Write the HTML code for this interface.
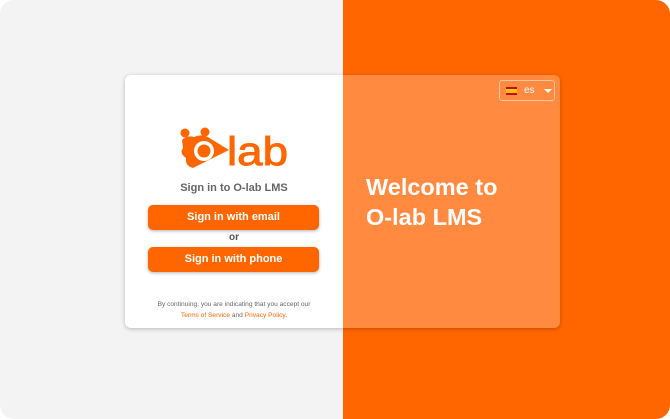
<!DOCTYPE html>
<html><head><meta charset="utf-8"><style>
*{margin:0;padding:0;box-sizing:border-box}
html,body{width:670px;height:419px;overflow:hidden;background:#fff}
body{font-family:"Liberation Sans",sans-serif}
.bg{position:absolute;left:0;top:0;width:670px;height:419px;border-radius:14px;overflow:hidden;background:#f3f3f3}
.right{position:absolute;left:343px;top:0;width:327px;height:419px;background:#ff6600}
.card{position:absolute;left:125px;top:75px;width:435px;height:253px;border-radius:6px;overflow:hidden;box-shadow:0 1px 4px rgba(0,0,0,.25)}
.cl{position:absolute;left:0;top:0;width:218px;height:253px;background:#fff}
.cr{position:absolute;left:218px;top:0;width:217px;height:253px;background:#ff8a40}
.title{position:absolute;left:0;width:218px;top:107px;text-align:center;font-size:11px;font-weight:bold;color:#666}
.btn{position:absolute;left:23px;width:171px;height:25px;border-radius:5px;background:#ff6600;color:#fff;font-weight:bold;font-size:11px;text-align:center;line-height:25px;box-shadow:0 1px 3px rgba(0,0,0,.3)}
.or{position:absolute;left:0;width:218px;top:157px;text-align:center;font-size:10px;font-weight:bold;color:#555}
.small{position:absolute;left:0;width:218px;top:224px;text-align:center;font-size:6.6px;color:#666;line-height:11px}
.small b{color:#ff6600;font-weight:normal}
.welcome{position:absolute;left:241px;top:97px;color:#fff;font-weight:bold;font-size:23.5px;line-height:30px}
.lang{position:absolute;left:374px;top:5px;width:56px;height:21px;border:1px solid #ffc7a0;border-radius:3px;color:#fff;font-size:10px}
</style></head><body>
<div class="bg"><div class="right"></div></div>
<div class="card">
 <div class="cl"></div>
 <div class="cr"></div>
 <svg style="position:absolute;left:54px;top:51px" width="112" height="44" viewBox="0 0 112 44">
  <circle cx="6" cy="7" r="4.5" fill="#ff6600"/>
  <circle cx="26" cy="6" r="4.5" fill="#ff6600"/>
  <path d="M3 14 Q8 9 15 11 Q24 7 32 13 L50 24 L14 42 Q6 40 7 32 Q0 27 4 22 Z" fill="#ff6600"/>
  <circle cx="25" cy="25" r="10" fill="#fff"/>
  <circle cx="25" cy="25" r="6.5" fill="#ff6600"/>
  <text x="48" y="39" font-family="Liberation Sans" font-size="40" fill="#ff6600" stroke="#ff6600" stroke-width="0.9" textLength="61" lengthAdjust="spacingAndGlyphs">lab</text>
 </svg>
 <div class="title">Sign in to O-lab LMS</div>
 <div class="btn" style="top:130px">Sign in with email</div>
 <div class="or">or</div>
 <div class="btn" style="top:172px">Sign in with phone</div>
 <div class="small">By continuing, you are indicating that you accept our<br><b>Terms of Service</b> and <b>Privacy Policy</b>.</div>
 <div class="welcome">Welcome to<br>O-lab LMS</div>
 <div class="lang">
  <div style="position:absolute;left:6px;top:6px;width:11px;height:8px;background:linear-gradient(#c60b1e 25%,#ffc400 25%,#ffc400 75%,#c60b1e 75%)"></div>
  <span style="position:absolute;left:24px;top:4px">es</span>
  <div style="position:absolute;left:44px;top:8px;border-left:4px solid transparent;border-right:4px solid transparent;border-top:4px solid #fff"></div>
 </div>
</div>
</body></html>
